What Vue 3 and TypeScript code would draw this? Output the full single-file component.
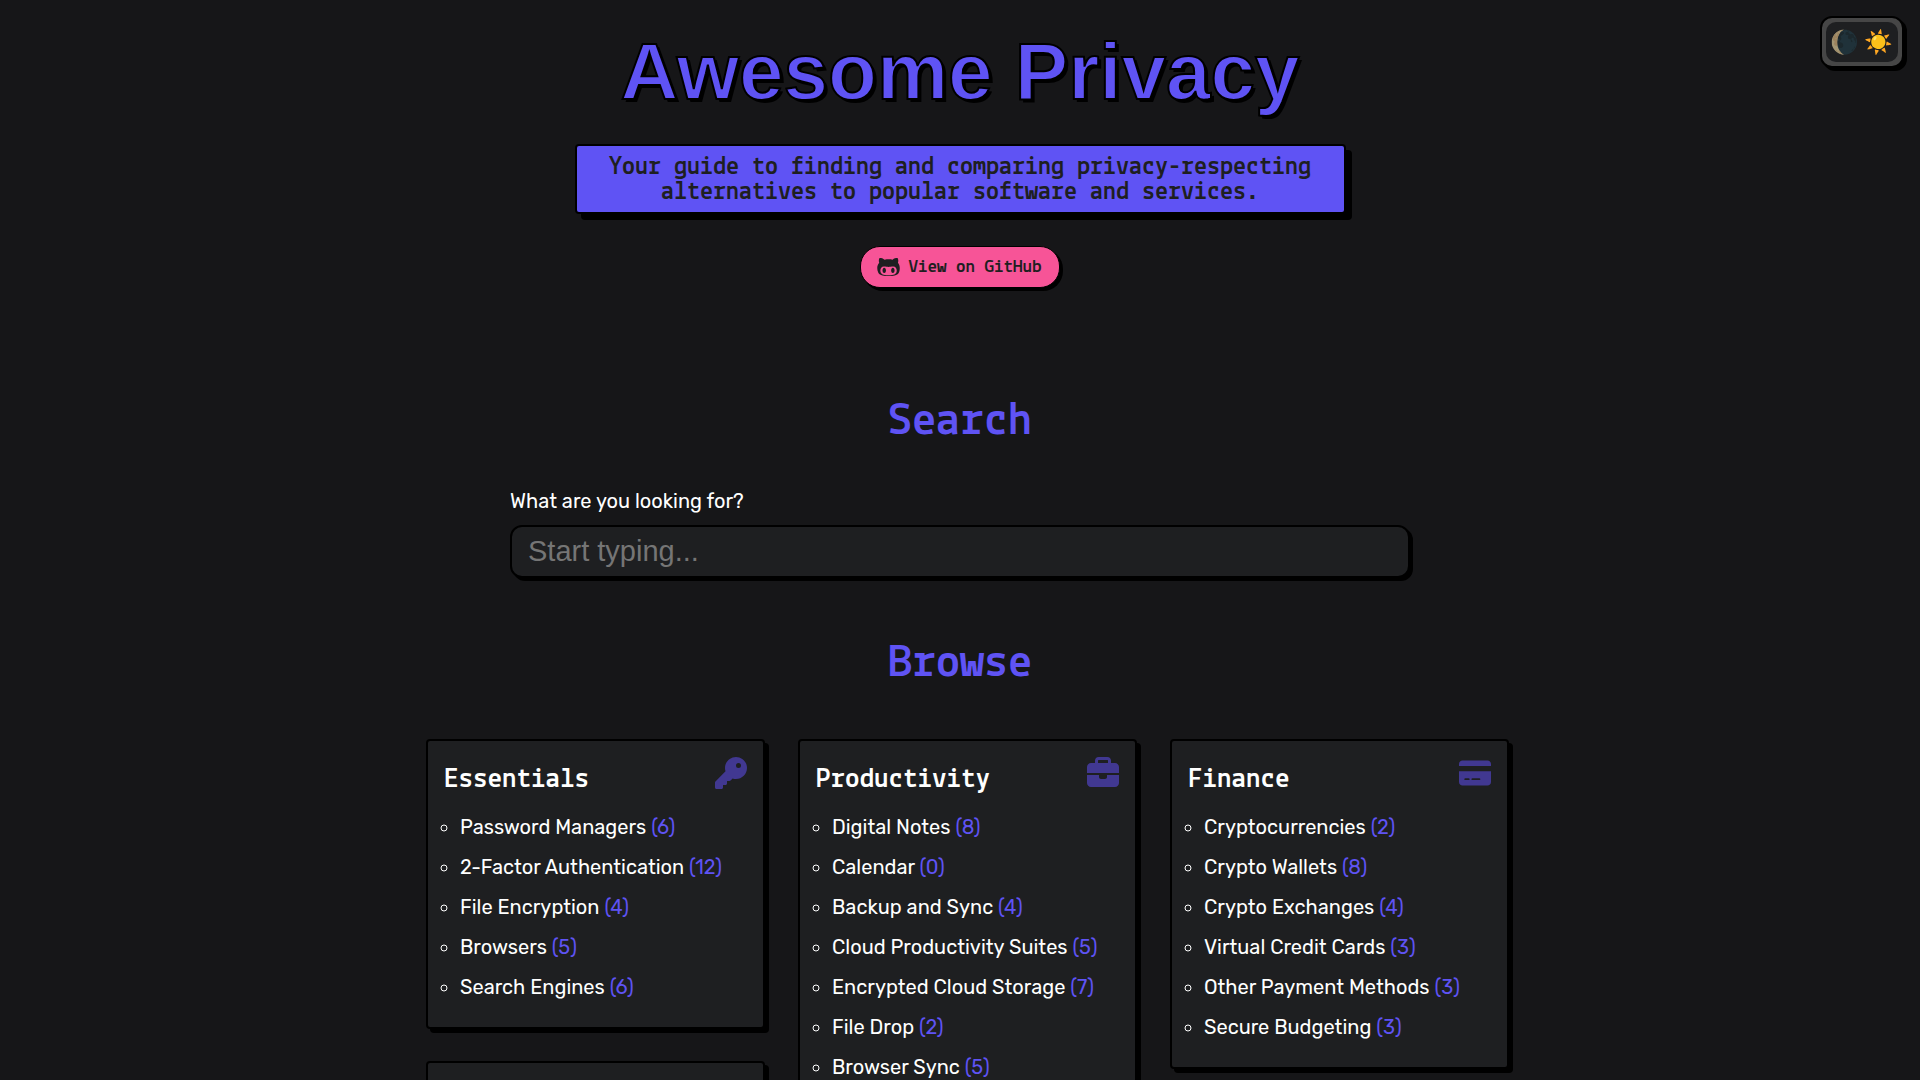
<script setup lang="ts">
import { ref } from 'vue'

interface Item { name: string; count: number }
interface Category { title: string; icon: string; viewBox: string; items: Item[] }

const query = ref('')

const icons = {
  key: 'M336 352c97.200 0 176-78.800 176-176S433.200 0 336 0S160 78.800 160 176c0 18.700 2.900 36.800 8.300 53.700L7 391c-4.500 4.500-7 10.600-7 17v80c0 13.300 10.700 24 24 24h80c13.300 0 24-10.700 24-24V448h40c13.300 0 24-10.700 24-24V384h40c6.400 0 12.500-2.500 17-7l33.300-33.300c16.900 5.400 35 8.300 53.700 8.300zM376 96a40 40 0 1 1 0 80 40 40 0 1 1 0-80z',
  briefcase: 'M184 48H328c4.400 0 8 3.600 8 8V96H176V56c0-4.400 3.600-8 8-8zm-56 8V96H64C28.700 96 0 124.700 0 160v96H192 320 512V160c0-35.300-28.700-64-64-64H384V56c0-30.900-25.100-56-56-56H184c-30.900 0-56 25.100-56 56zM512 288H320v32c0 17.700-14.300 32-32 32H224c-17.700 0-32-14.300-32-32V288H0V416c0 35.300 28.700 64 64 64H448c35.300 0 64-28.700 64-64V288z',
  card: 'M64 32C28.700 32 0 60.700 0 96v32H576V96c0-35.300-28.700-64-64-64H64zM576 224H0V416c0 35.300 28.700 64 64 64H512c35.300 0 64-28.700 64-64V224zM112 352h64c8.800 0 16 7.200 16 16s-7.200 16-16 16H112c-8.800 0-16-7.200-16-16s7.200-16 16-16zm112 16c0-8.800 7.200-16 16-16H368c8.800 0 16 7.200 16 16s-7.200 16-16 16H240c-8.800 0-16-7.200-16-16z',
}

const columns: Category[][] = [
  [
    {
      title: 'Essentials', icon: icons.key, viewBox: '0 0 512 512',
      items: [
        { name: 'Password Managers', count: 6 },
        { name: '2-Factor Authentication', count: 12 },
        { name: 'File Encryption', count: 4 },
        { name: 'Browsers', count: 5 },
        { name: 'Search Engines', count: 6 },
      ],
    },
    { title: '', icon: '', viewBox: '0 0 512 512', items: [] },
  ],
  [
    {
      title: 'Productivity', icon: icons.briefcase, viewBox: '0 0 512 512',
      items: [
        { name: 'Digital Notes', count: 8 },
        { name: 'Calendar', count: 0 },
        { name: 'Backup and Sync', count: 4 },
        { name: 'Cloud Productivity Suites', count: 5 },
        { name: 'Encrypted Cloud Storage', count: 7 },
        { name: 'File Drop', count: 2 },
        { name: 'Browser Sync', count: 5 },
      ],
    },
  ],
  [
    {
      title: 'Finance', icon: icons.card, viewBox: '0 -32 576 576',
      items: [
        { name: 'Cryptocurrencies', count: 2 },
        { name: 'Crypto Wallets', count: 8 },
        { name: 'Crypto Exchanges', count: 4 },
        { name: 'Virtual Credit Cards', count: 3 },
        { name: 'Other Payment Methods', count: 3 },
        { name: 'Secure Budgeting', count: 3 },
      ],
    },
  ],
]
</script>

<template>
  <div class="page">
    <button class="theme" type="button" aria-label="Toggle theme">
      <span class="moon">🌘</span><span>☀️</span>
    </button>

    <header class="hero">
      <h1>Awesome Privacy</h1>
      <p class="tagline">
        Your guide to finding and comparing privacy-respecting<br>alternatives to popular software and services.
      </p>
      <a class="github" href="#github">
        <svg viewBox="0 0 480 512" width="23" height="24" aria-hidden="true">
          <path fill="currentColor" d="M186.100 328.700c0 20.900-10.900 55.100-36.700 55.100s-36.700-34.200-36.700-55.100 10.900-55.100 36.700-55.100 36.700 34.200 36.700 55.100zM480 278.200c0 31.900-3.200 65.700-17.500 95-37.900 76.600-142.100 74.800-216.700 74.800-75.800 0-186.200 2.700-225.600-74.800-14.600-29-20.200-63.100-20.200-95 0-41.900 13.900-81.500 41.500-113.600-5.200-15.800-7.700-32.400-7.700-48.800 0-21.500 4.900-32.300 14.600-51.800 45.300 0 74.300 9 108.800 36 29-6.900 58.800-10 88.700-10 27 0 54.200 2.900 80.400 9.200 34-26.700 63-35.200 107.800-35.200 9.800 19.500 14.600 30.300 14.600 51.800 0 16.400-2.600 32.700-7.700 48.200 27.500 32.400 39 72.300 39 114.200zm-64.300 50.500c0-43.900-26.700-82.600-73.500-82.600-18.900 0-37 3.400-56 6-14.900 2.300-29.800 3.200-45.100 3.200-15.200 0-30.100-.9-45.100-3.200-18.700-2.600-37-6-56-6-46.800 0-73.500 38.700-73.500 82.600 0 87.800 80.400 101.300 150.400 101.300h48.200c70.300 0 150.600-13.400 150.600-101.300zm-82.600-55.100c-25.800 0-36.700 34.200-36.700 55.100s10.900 55.100 36.700 55.100 36.700-34.200 36.700-55.100-10.900-55.100-36.700-55.100z" />
        </svg>
        <span>View on GitHub</span>
      </a>
    </header>

    <section class="search">
      <h2>Search</h2>
      <label for="query">What are you looking for?</label>
      <input id="query" v-model="query" type="text" placeholder="Start typing...">
    </section>

    <section class="browse">
      <h2>Browse</h2>
      <div class="columns">
        <div v-for="(column, c) in columns" :key="c" class="column">
          <article v-for="(category, i) in column" :key="i" class="card">
            <div v-if="category.title" class="card-head">
              <h3>{{ category.title }}</h3>
              <svg class="icon" :viewBox="category.viewBox" aria-hidden="true">
                <path :d="category.icon" fill="currentColor" fill-rule="evenodd" />
              </svg>
            </div>
            <ul v-if="category.items.length">
              <li v-for="item in category.items" :key="item.name">
                <a href="#category">{{ item.name }} <span class="count">({{ item.count }})</span></a>
              </li>
            </ul>
          </article>
        </div>
      </div>
    </section>
  </div>
</template>

<style>
html {
  background: #161618;
}
body {
  margin: 0;
}
</style>

<style scoped>
* {
  box-sizing: border-box;
}
.page {
  position: relative;
  height: 100vh;
  overflow: hidden;
  background: #161618;
  color: #fff;
  font-family: Rubik, Roboto, sans-serif;
  font-size: 20px;
}
h1, h2, h3, p, ul {
  margin: 0;
}
a {
  color: inherit;
  text-decoration: none;
}
.theme {
  position: absolute;
  top: 16px;
  right: 16px;
  display: flex;
  align-items: center;
  justify-content: center;
  gap: 5px;
  width: 84px;
  height: 52px;
  padding: 0;
  border: 2px solid #000;
  border-radius: 12px;
  background: #464646;
  box-shadow: 3px 3px 0 #000;
  font-family: "Noto Color Emoji", sans-serif;
  font-size: 23px;
}
.theme::before {
  content: "";
  position: absolute;
  inset: 4px;
  border-radius: 10px;
  background: #1e1f21;
}
.theme span {
  position: relative;
}
.moon {
  opacity: 0.6;
}
.hero {
  display: flex;
  flex-direction: column;
  align-items: center;
  padding-top: 26px;
}
h1 {
  color: #5f53f4;
  font: bold 80px/92px "Liberation Sans", Arial, sans-serif;
  -webkit-text-stroke: 2px #000;
  text-shadow: 3px 3px 0 #000;
}
.tagline {
  width: 771px;
  max-width: 90%;
  margin-top: 26px;
  padding: 9px 8px 7px;
  border: 2px solid #000;
  border-radius: 4px;
  background: #5f53f4;
  box-shadow: 6px 6px 0 #000;
  color: #1e1f21;
  text-align: center;
  font: bold 26px/25px Lekton, "Liberation Mono", monospace;
}
.github {
  display: flex;
  align-items: center;
  gap: 8px;
  height: 42px;
  margin-top: 32px;
  padding: 0 17px 0 16px;
  border: 1px solid #000;
  border-radius: 20px;
  background: #f75497;
  box-shadow: 3px 3px 0 #000;
  color: #1e1f21;
  font: bold 19px/24px Lekton, "Liberation Mono", monospace;
}
.github span {
  padding-top: 2px;
}
h2 {
  color: #5f53f4;
  text-align: center;
  font: bold 48px/52px Lekton, "Liberation Mono", monospace;
}
.search {
  width: 900px;
  max-width: 90%;
  margin: 108px auto 0;
}
label {
  display: block;
  margin-top: 41px;
  line-height: 24px;
}
input {
  display: block;
  width: 100%;
  height: 53px;
  margin-top: 12px;
  padding: 0 16px;
  border: 2px solid #000;
  border-radius: 12px;
  background: #1e1f21;
  box-shadow: 3px 3px 0 #000;
  color: #fff;
  font: 29px "Liberation Sans", Arial, sans-serif;
}
input::placeholder {
  color: #757575;
}
.browse {
  margin-top: 60px;
}
.columns {
  display: flex;
  gap: 33px;
  max-width: 1100px;
  margin: 49px auto 0;
  padding: 0 1px 0 16px;
}
.column {
  display: flex;
  flex: 1;
  flex-direction: column;
  gap: 32px;
}
.card {
  min-height: 80px;
  padding: 16px 16px 20px;
  border: 2px solid #000;
  border-radius: 4px;
  background: #1e1f21;
  box-shadow: 4px 4px 0 #000;
}
.card-head {
  display: flex;
  justify-content: space-between;
}
h3 {
  font: bold 29px/46px Lekton, "Liberation Mono", monospace;
}
.icon {
  width: 32px;
  height: 32px;
  color: #413891;
}
ul {
  padding: 4px 0 0 16px;
  list-style: circle;
}
li {
  line-height: 24px;
  padding: 8px 0;
}
.count {
  color: #5f53f4;
}
</style>
